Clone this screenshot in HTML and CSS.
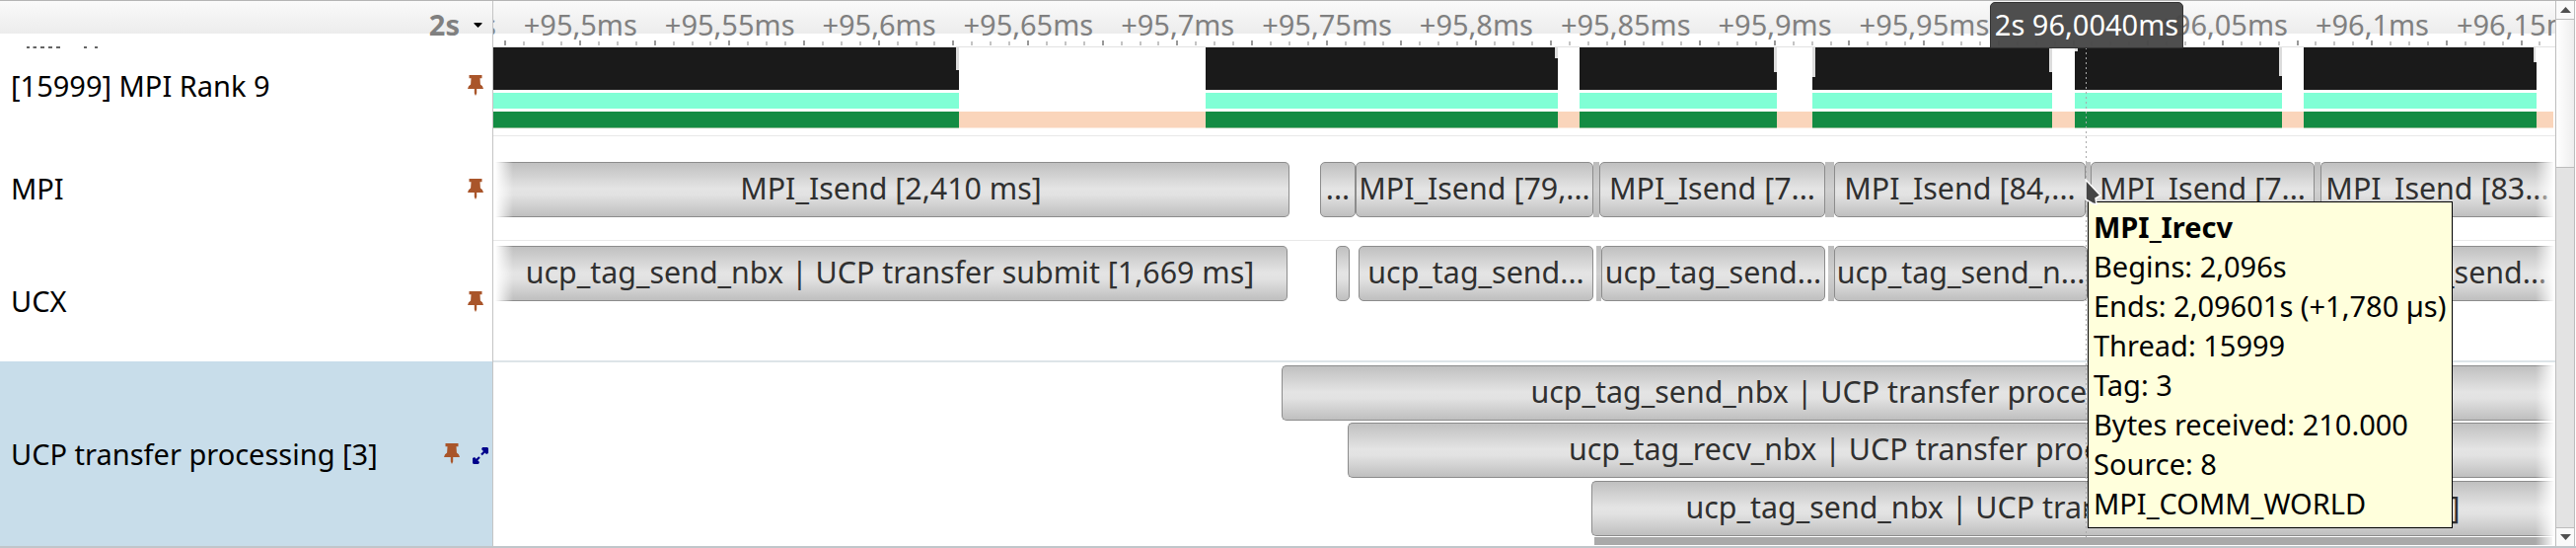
FILE: index.html
```html
<!DOCTYPE html>
<html lang="en">
<head>
<meta charset="utf-8">
<title>Timeline</title>
<link rel="stylesheet" href="styles.css">
</head>
<body>
<svg class="defs" width="0" height="0">
  <symbol id="pin" viewBox="0 0 16 21"><path fill="#a9552a" d="M1.500 0h13v3.200h-2l.4 6.200q2.600 1.400 3.100 4.600H9.200v4.500L8 21l-1.200-2.500V14H0q.5-3.200 3.100-4.600l.4-6.200h-2z"/></symbol>
  <symbol id="expand" viewBox="0 0 16 17"><path fill="none" stroke="#00008b" stroke-width="2.200" d="M3 14 7 10M9 7.500l4-4"/><path fill="#00008b" d="M10 0h5l1 1v5l-2 1-5-5zM2 10l5 5-1 2H1l-1-1v-5z"/></symbol>
</svg>
<main class="app">
  <aside class="names">
    <div class="names-head">2s<svg class="caret" viewBox="0 0 8 5"><path d="M0 0h8v1L4 5 0 1z"/></svg></div>
    <div class="name rank">[15999] MPI Rank 9<svg class="pin"><use href="#pin"/></svg>
      <svg class="remnant" viewBox="0 0 74 2"><path stroke="#333" stroke-width="1.500" d="M0 1h3m3.500 0h3.500m4 0h4m4 0h4m4 0h4m24 0h3m8 0h3"/></svg>
    </div>
    <div class="name mpi">MPI<svg class="pin"><use href="#pin"/></svg></div>
    <div class="name ucx">UCX<svg class="pin"><use href="#pin"/></svg></div>
    <div class="name ucp">UCP transfer processing [3]<svg class="pin"><use href="#pin"/></svg><svg class="expand"><use href="#expand"/></svg></div>
  </aside>
  <section class="chart">
    <header class="ruler">
      <div class="labels"><span>+95,45ms</span><span>+95,5ms</span><span>+95,55ms</span><span>+95,6ms</span><span>+95,65ms</span><span>+95,7ms</span><span>+95,75ms</span><span>+95,8ms</span><span>+95,85ms</span><span>+95,9ms</span><span>+95,95ms</span><span></span><span>+96,05ms</span><span>+96,1ms</span><span>+96,15ms</span></div>
      <svg class="ticks" id="ticks" width="2090" height="6"></svg>
    </header>
    <div class="samples">
      <svg width="2090" height="82">
        <g fill="#dcdcdc"><path d="M469 0h3v23h-3zM1076 0h3v11h-3zM1298 0h3v25h-3zM1337 0h3v30h-3zM1577 0h3v25h-3zM1603 0h3v4h-3zM1810 0h3v29h-3zM2068 0h2v15h-2z"/></g>
        <path fill="#1a1a1a" d="M0 0H469V23H472V43H0zM722 0H1076V11H1079V43H722zM1101 0H1298V25H1301V43H1101zM1340 0H1577V25H1580V43H1337V30H1340zM1606 0H1810V29H1813V43H1603V4H1606zM1835 0H2068V15H2071V43H1835z"/>
        <path fill="#80ffd5" d="M0 46H472V62H0zM722 46H1079V62H722zM1101 46H1301V62H1101zM1337 46H1580V62H1337zM1603 46H1813V62H1603zM1835 46H2071V62H1835z"/>
        <path fill="#fad5bb" d="M0 65H2088V81.500H0z"/>
        <path fill="#138c43" d="M0 65H472V81.500H0zM722 65H1079V81.500H722zM1101 65H1301V81.500H1101zM1337 65H1580V81.500H1337zM1603 65H1813V81.500H1603zM1835 65H2071V81.500H1835z"/>
      </svg>
    </div>
    <div class="track t-mpi">
      <b class="bar open-left" style="width:807px">MPI_Isend [2,410 ms]</b>
      <b class="bar" style="margin-left:31px;width:36px">...</b>
      <b class="bar" style="width:241px">MPI_Isend [79,...</b>
      <i class="sliver" style="width:6px"></i>
      <b class="bar" style="width:229px">MPI_Isend [7...</b>
      <i class="sliver" style="width:9px"></i>
      <b class="bar" style="width:255px">MPI_Isend [84,...</b>
      <i class="sliver" style="width:5px"></i>
      <b class="bar" style="width:227px">MPI_Isend [7...</b>
      <i class="sliver" style="width:6px"></i>
      <b class="bar open-right" style="width:236px">MPI_Isend [83...</b>
    </div>
    <div class="track t-ucx">
      <b class="bar open-left" style="width:805px">ucp_tag_send_nbx | UCP transfer submit [1,669 ms]</b>
      <b class="bar" style="margin-left:49px;width:14px"></b>
      <b class="bar" style="margin-left:9px;width:238px">ucp_tag_send...</b>
      <i class="sliver" style="margin-left:3px;width:5px"></i>
      <b class="bar" style="width:227px">ucp_tag_send...</b>
      <i class="sliver" style="margin-left:3px;width:6px"></i>
      <b class="bar" style="width:257px">ucp_tag_send_n...</b>
      <b class="bar" style="margin-left:4px;width:226px">ucp_tag_send...</b>
      <i class="sliver" style="width:6px"></i>
      <b class="bar open-right" style="width:238px">ucp_tag_send...</b>
    </div>
    <div class="track t-ucp">
      <b class="bar open-right" style="margin-left:799px">ucp_tag_send_nbx | UCP transfer processing [1,825 µs]</b>
      <b class="bar open-right" style="margin-left:866px">ucp_tag_recv_nbx | UCP transfer processing [1,825 µs]</b>
      <b class="bar open-right" style="margin-left:1113px">ucp_tag_send_nbx | UCP transfer processing [1,825 µs]</b>
      <i class="more"></i>
    </div>
    <div class="crosshair"></div>
    <div class="time-flag">2s 96,0040ms</div>
    <div class="tip"><strong>MPI_Irecv</strong><span>Begins: 2,096s</span><span>Ends: 2,09601s (+1,780 µs)</span><span>Thread: 15999</span><span>Tag: 3</span><span>Bytes received: 210.000</span><span>Source: 8</span><span>MPI_COMM_WORLD</span></div>
    <svg class="pointer" viewBox="0 0 18 30"><path fill="#454545" stroke="#fff" stroke-width="1.500" d="M1 1 16 17 11 20 12 26 8 25 1 21z"/></svg>
  </section>
  <div class="scrollbar">
    <div class="step"><svg viewBox="0 0 11 6"><path d="M0 6h11L5.500 0z"/></svg></div>
    <div class="thumb"></div>
    <div class="groove"></div>
    <div class="step down"><svg viewBox="0 0 11 6"><path d="M0 0h11L5.500 6z"/></svg></div>
  </div>
</main>
<script src="ticks.js"></script>
</body>
</html>
```
FILE: ticks.js
```js
// Ruler ticks: every fourth one is a major tick.
const ruler = document.getElementById('ticks');
const pitch = 151.35 / 8;
let marks = '';
for (let k = -4; k <= 105; k++) {
  const x = Math.round(88 + k * pitch) - 1;
  const major = k % 4 === 0;
  marks += `<rect x="${x}" y="${major ? 0 : 1}" width="2" height="${major ? 5 : 4}" fill="${major ? '#999' : '#c4c4c4'}"/>`;
}
ruler.innerHTML = marks;
```
FILE: styles.css
```css
* { box-sizing: border-box; }
body { margin: 0; background: #fff; font: 29px/40px "Noto Sans", sans-serif; color: #000; overflow: hidden; }
.defs { display: block; position: absolute; }
.app { display: flex; width: 2611px; height: 555px; border-top: 1px solid #b4b4b4; border-bottom: 2px solid #c0c6ca; }

.names { display: flex; flex-direction: column; width: 500px; border-right: 1px solid #c4c4c4; }
.names-head { height: 33px; display: flex; align-items: center; justify-content: flex-end; padding: 13px 10px 0 0; gap: 14px; font-weight: 700; color: #808080; background: linear-gradient(#fafafa, #ececec); line-height: 33px; }
.caret { width: 9px; height: 5px; margin-top: 3px; fill: #000; }
.name { display: flex; align-items: center; padding: 0 9px 0 11px; }
.rank { height: 104px; padding-top: 1px; position: relative; }
.mpi { height: 106px; }
.ucx { height: 122px; }
.ucp { flex: 1; background: #c8ddea; padding-right: 4px; }
.pin { width: 16px; height: 21px; margin-left: auto; }
.expand { width: 16px; height: 17px; margin: 3px 0 0 13px; }
.remnant { position: absolute; left: 27px; top: 13px; width: 74px; height: 2px; }

.chart { position: relative; width: 2090px; overflow: hidden; display: flex; flex-direction: column; }
.ruler { height: 47px; overflow: hidden; background: linear-gradient(#fafafa, #ececec) 0 0 / 100% 33px no-repeat; border-bottom: 1px solid #e2e2e2; }
.labels { display: flex; height: 40px; margin-left: -138.700px; padding-top: 4px; color: #808080; }
.labels span { flex: 0 0 151.350px; text-align: center; }
.ticks { display: block; }
.samples { height: 90px; border-bottom: 1px solid #e8e8e8; }
.samples svg { display: block; }

.track { display: flex; position: relative; border-bottom: 1px solid #e8e8e8; }
.track::before, .track::after { content: ""; position: absolute; top: 0; bottom: 0; width: 20px; z-index: 1; }
.track::before { left: 0; background: linear-gradient(90deg, #fff 10%, #fff0); }
.track::after { right: 0; background: linear-gradient(270deg, #fff 5%, #fff0); }
.t-mpi { height: 106px; padding-top: 26px; }
.t-ucx { height: 123px; padding-top: 5px; border-bottom: 2px solid #dde4e8; }
.t-ucp { flex: 1; flex-direction: column; padding-top: 3px; border: 0; gap: 2.300px; }
.t-ucp .bar { padding-right: 2px; }
.bar { flex: none; height: 56px; border: 1.500px solid #8c8c8c; border-radius: 5px; background: linear-gradient(#c0c0c0, #e4e4e4 48%, #e2e2e2 60%, #bfbfbf); color: #303030; font-size: 30.400px; font-weight: 400; line-height: 52px; display: flex; justify-content: center; white-space: nowrap; }
.open-left { border-left: 0; border-radius: 0 5px 5px 0; }
.open-right { border-right: 0; border-radius: 5px 0 0 5px; }
.sliver { flex: none; height: 56px; background: linear-gradient(#bcbcbc, #d0d0d0 50%, #bcbcbc); }
.more { height: 8px; margin: -1px 3px 0 1116px; background: #a9a9a9; }

.crosshair { position: absolute; left: 1614px; top: 47px; bottom: 8px; width: 1px; background: repeating-linear-gradient(#aaa 0 2px, #fff0 2px 5px); z-index: 2; }
.time-flag { position: absolute; left: 1517px; top: 1px; width: 196px; height: 47px; background: #474747f5; border: 1px solid #333; border-radius: 5px 5px 0 0; color: #fff; text-align: center; padding-top: 2px; z-index: 3; }
.tip { position: absolute; left: 1616px; top: 203px; width: 370px; height: 331px; padding: 5px; border: 1px solid #000; background: #ffffdc; display: flex; flex-direction: column; z-index: 3; white-space: nowrap; }
.pointer { position: absolute; left: 1613px; top: 180px; width: 18px; height: 30px; z-index: 4; }

.scrollbar { width: 20px; border: solid #bdbdbd; border-width: 0 1px; display: flex; flex-direction: column; }
.step { height: 19px; border-bottom: 1px solid #bdbdbd; display: flex; align-items: center; justify-content: center; background: #fafafa; }
.step svg { width: 11px; height: 6px; fill: #505050; }
.thumb { height: 150px; background: linear-gradient(90deg, #fff, #eee); border-bottom: 1px solid #bdbdbd; }
.groove { flex: 1; background: #e3e3e3; }
.down { border-top: 1px solid #bdbdbd; border-bottom: 0; }
```
